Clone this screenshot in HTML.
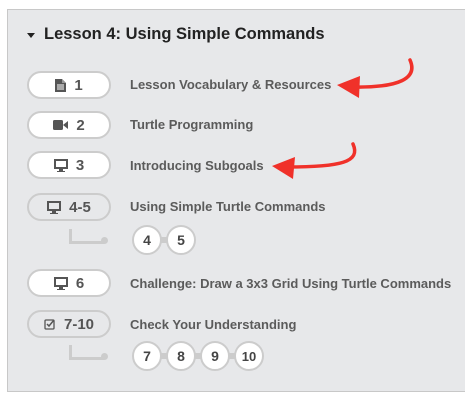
<!DOCTYPE html>
<html><head><style>
body{margin:0;width:465px;height:402px;background:#fff;position:relative;overflow:hidden;font-family:"Liberation Sans",sans-serif;}
.panel{position:absolute;left:7px;top:9px;width:470px;height:383px;background:#e7e8ea;border:1px solid #c8c8c8;box-sizing:border-box;}
.title{position:absolute;left:44px;top:25px;font-size:16.5px;color:#222;font-weight:bold;}
.tri{position:absolute;left:27px;top:33px;width:0;height:0;border-left:4px solid transparent;border-right:4px solid transparent;border-top:5px solid #222}
.pill{position:absolute;left:27px;width:84px;height:28px;box-sizing:border-box;border:2px solid #ccc;border-radius:14px;background:#fff;display:flex;align-items:center;justify-content:center;font-size:15px;font-weight:bold;color:#555;gap:8px}
.pill.g{background:#e7e8ea}
.lbl{position:absolute;left:130px;font-size:13px;font-weight:bold;color:#5b5b5b}
.b{position:absolute;width:30px;height:30px;box-sizing:border-box;border:2px solid #ccc;border-radius:50%;background:#fff;display:flex;align-items:center;justify-content:center;font-size:14px;font-weight:bold;color:#444}
.bar{position:absolute;height:6px;background:#ccc}
.L{position:absolute;left:69px;width:32px;height:12px;border-left:3px solid #ccc;border-bottom:3px solid #ccc}
.dot{position:absolute;width:7px;height:7px;border-radius:50%;background:#ccc}
</style></head><body>
<div class="panel"></div>
<div class="tri"></div>
<div class="title">Lesson 4: Using Simple Commands</div>

<div class="pill" style="top:71px"><svg width="11" height="13" viewBox="0 0 11 13"><path d="M0 0h7l4 4v9H0z" fill="#555"/><path d="M7 0v4h4" fill="#999"/><path d="M2 6h7M2 8h7M2 10h7" stroke="#fff" stroke-width="1"/></svg><span>1</span></div>
<div class="lbl" style="top:77px">Lesson Vocabulary &amp; Resources</div>

<div class="pill" style="top:111px"><svg width="15" height="10" viewBox="0 0 15 10"><rect x="0" y="0" width="10" height="10" rx="1.5" fill="#555"/><path d="M10 5l5-4v8z" fill="#555"/></svg><span>2</span></div>
<div class="lbl" style="top:117px">Turtle Programming</div>

<div class="pill" style="top:151px"><svg width="14" height="13" viewBox="0 0 14 13"><rect x="1" y="1" width="12" height="8" fill="none" stroke="#555" stroke-width="2"/><path d="M5 10h4v2h2v1H3v-1h2z" fill="#555"/></svg><span>3</span></div>
<div class="lbl" style="top:158px">Introducing Subgoals</div>

<div class="pill g" style="top:193px"><svg width="14" height="13" viewBox="0 0 14 13"><rect x="1" y="1" width="12" height="8" fill="none" stroke="#555" stroke-width="2"/><path d="M5 10h4v2h2v1H3v-1h2z" fill="#555"/></svg><span>4-5</span></div>
<div class="lbl" style="top:199px">Using Simple Turtle Commands</div>
<div class="L" style="top:229px"></div><div class="dot" style="left:101px;top:237px"></div>
<div class="bar" style="left:150px;width:30px;top:237px"></div>
<div class="b" style="left:132px;top:225px">4</div><div class="b" style="left:166px;top:225px">5</div>

<div class="pill" style="top:269px"><svg width="14" height="13" viewBox="0 0 14 13"><rect x="1" y="1" width="12" height="8" fill="none" stroke="#555" stroke-width="2"/><path d="M5 10h4v2h2v1H3v-1h2z" fill="#555"/></svg><span>6</span></div>
<div class="lbl" style="top:276px">Challenge: Draw a 3x3 Grid Using Turtle Commands</div>

<div class="pill g" style="top:310px"><svg width="12" height="12" viewBox="0 0 12 12"><rect x="1" y="2" width="9" height="9" rx="1" fill="none" stroke="#555" stroke-width="1.3"/><path d="M3 6l2 2 5-6" fill="none" stroke="#555" stroke-width="1.5"/></svg><span>7-10</span></div>
<div class="lbl" style="top:317px">Check Your Understanding</div>
<div class="L" style="top:345px"></div><div class="dot" style="left:101px;top:353px"></div>
<div class="bar" style="left:150px;width:100px;top:353px"></div>
<div class="b" style="left:132px;top:341px">7</div><div class="b" style="left:166px;top:341px">8</div><div class="b" style="left:200px;top:341px">9</div><div class="b" style="left:234px;top:341px;font-size:13px">10</div>

<svg style="position:absolute;left:0;top:0" width="465" height="402">
<path d="M410 60 C418 78 400 88 352 87" fill="none" stroke="#f0312a" stroke-width="3.5" stroke-linecap="round"/>
<path d="M337 85 L360 76 L359 98 Z" fill="#f0312a"/>
<path d="M353 144 C361 162 341 167 287 167" fill="none" stroke="#f0312a" stroke-width="3.5" stroke-linecap="round"/>
<path d="M272 166 L295 157 L293 179 Z" fill="#f0312a"/>
</svg>
</body></html>
